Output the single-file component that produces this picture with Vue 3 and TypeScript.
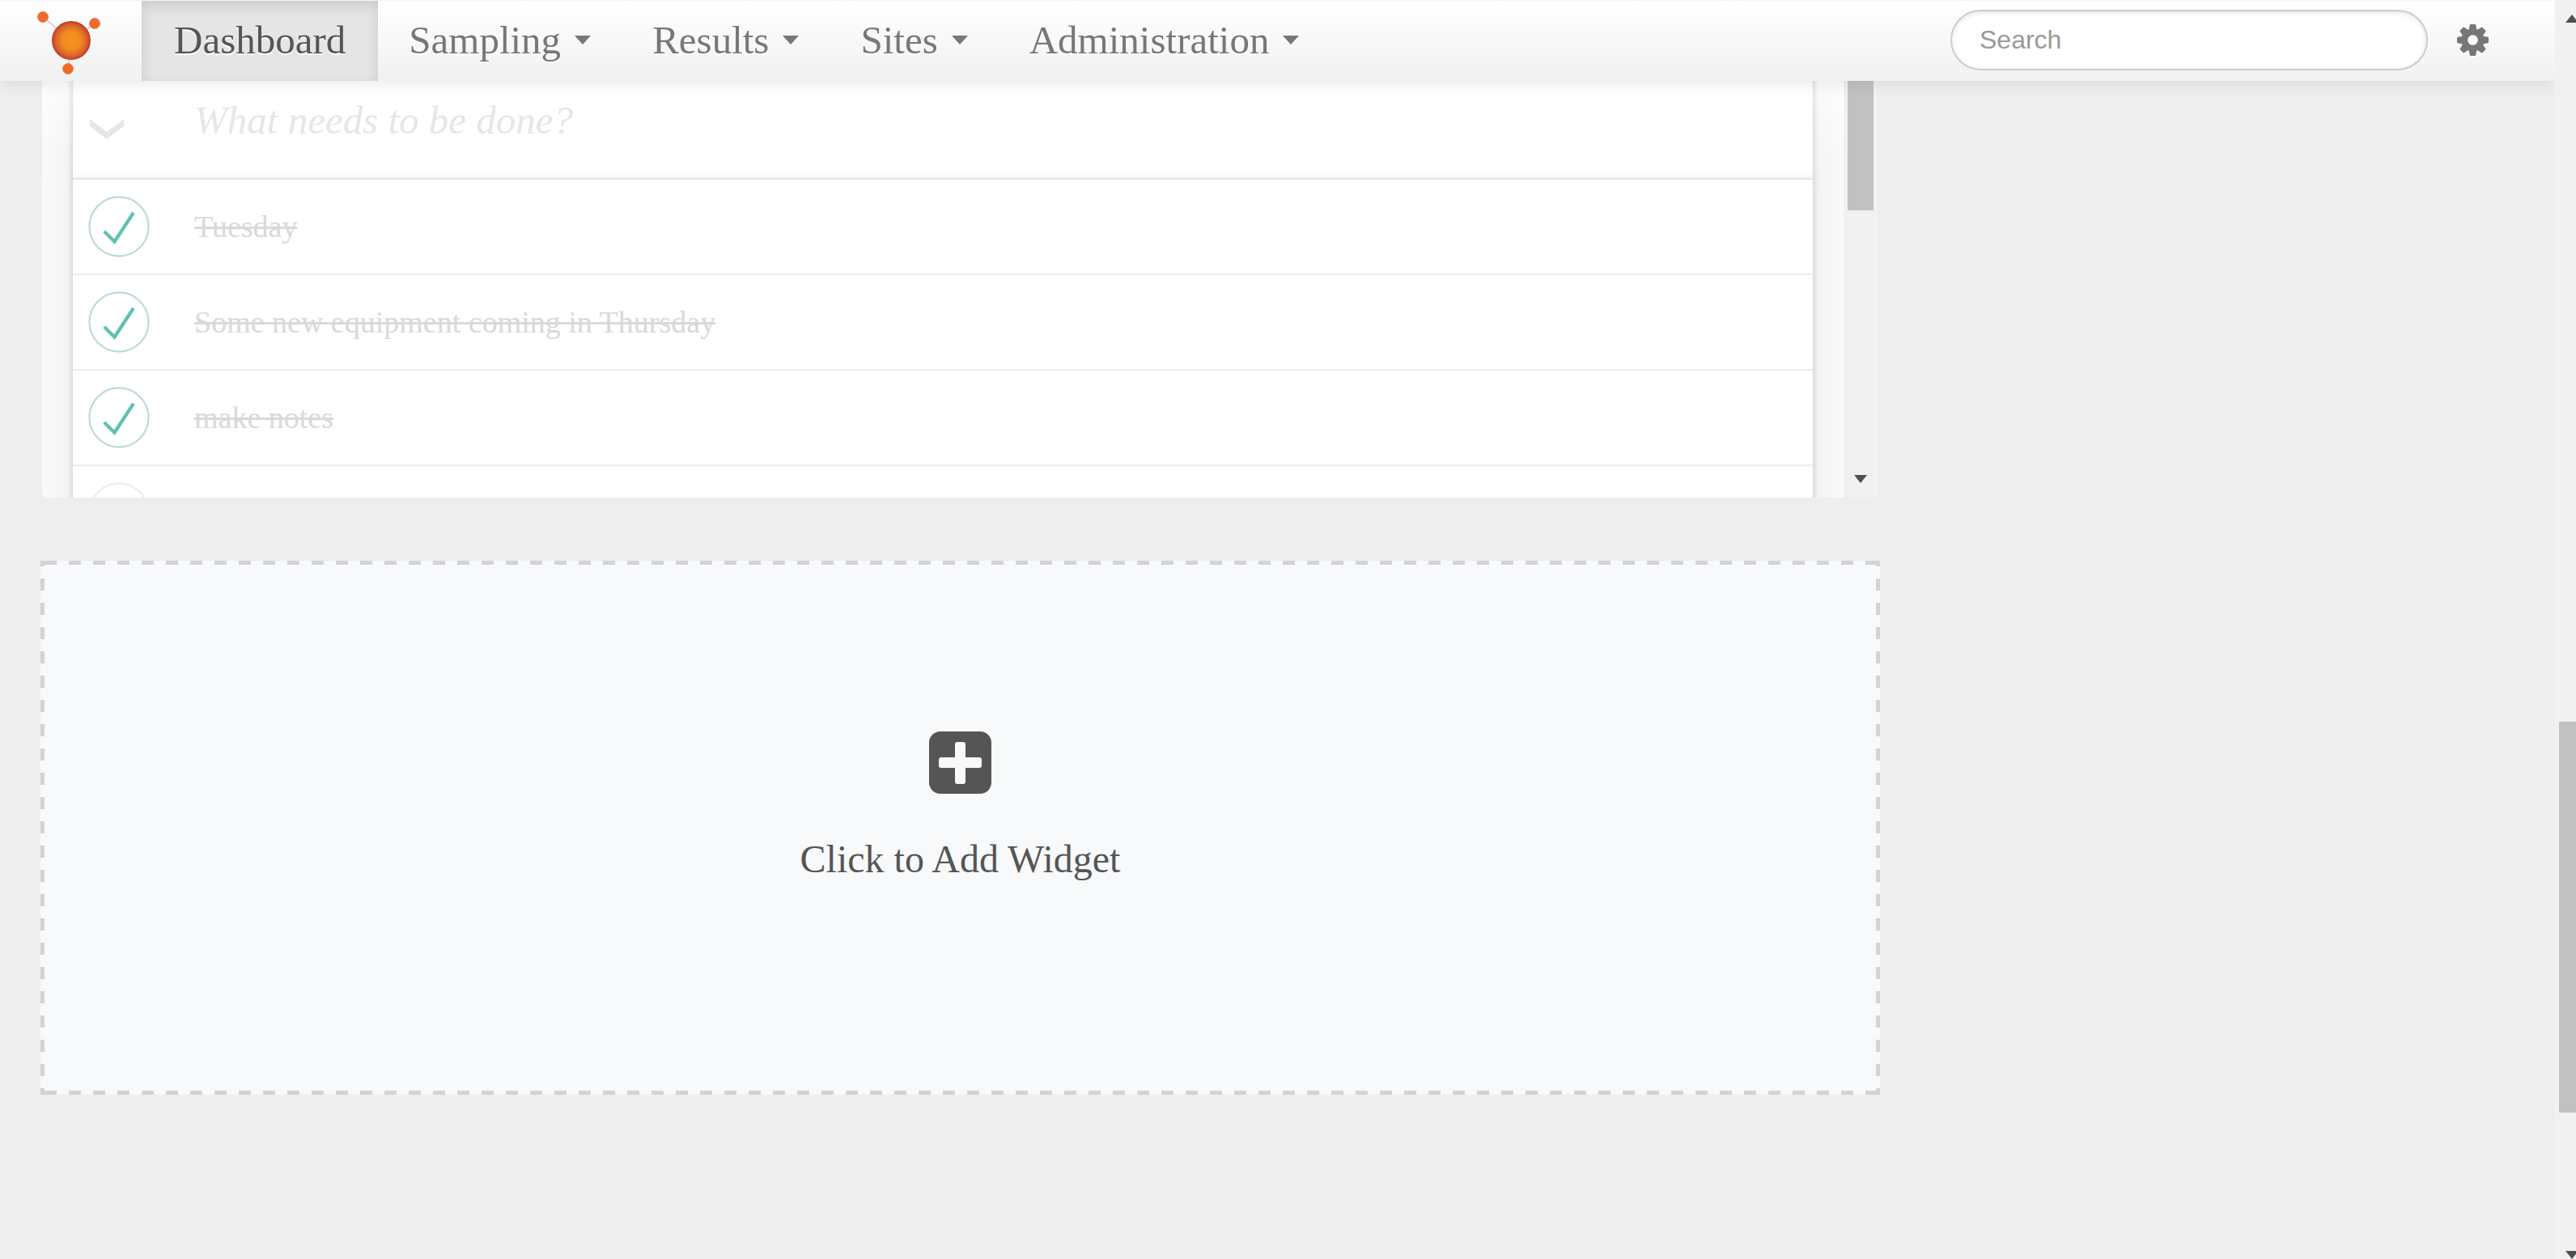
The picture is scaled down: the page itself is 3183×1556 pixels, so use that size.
<script setup lang="ts">
import { ref } from 'vue'

interface MenuItem {
  label: string
  active?: boolean
}

interface Todo {
  id: number
  title: string
  done: boolean
}

const menu: MenuItem[] = [
  { label: 'Dashboard', active: true },
  { label: 'Sampling' },
  { label: 'Results' },
  { label: 'Sites' },
  { label: 'Administration' },
]

const query = ref('')
const draft = ref('')
const todos = ref<Todo[]>([
  { id: 1, title: 'Tuesday', done: true },
  { id: 2, title: 'Some new equipment coming in Thursday', done: true },
  { id: 3, title: 'make notes', done: true },
  { id: 4, title: '', done: false },
])
</script>

<template>
  <div class="shell">
    <div class="page">
      <header class="navbar">
        <a class="brand" href="#" aria-label="Home">
          <svg width="80" height="80" viewBox="0 0 80 80" aria-hidden="true">
            <defs>
              <radialGradient id="core">
                <stop offset="0" stop-color="#f7941e" />
                <stop offset="0.45" stop-color="#f18c20" />
                <stop offset="0.8" stop-color="#d9642a" />
                <stop offset="1" stop-color="#bf3a27" />
              </radialGradient>
            </defs>
            <path d="M8 8 43 37M72 16 43 37M39 72 43 37" stroke="#d3d3d3" stroke-width="2" />
            <circle cx="43" cy="37" r="24" fill="url(#core)" />
            <g fill="#f26a25" stroke="#d98a60" stroke-width="1">
              <circle cx="8" cy="8" r="6.500" />
              <circle cx="72" cy="16" r="6.500" />
              <circle cx="39" cy="72" r="6.500" />
            </g>
          </svg>
        </a>
        <nav class="menu">
          <a v-for="item in menu" :key="item.label" href="#" :class="{ active: item.active }">
            {{ item.label }}<i v-if="!item.active" class="caret"></i>
          </a>
        </nav>
        <input v-model="query" class="search" type="search" placeholder="Search" aria-label="Search" />
        <button class="settings" type="button" aria-label="Settings">
          <svg width="39" height="39" viewBox="-20 -20 40 40" aria-hidden="true">
            <g fill="#777">
              <path
                fill-rule="evenodd"
                d="M0-14.500A14.500 14.500 0 1 1 0 14.500A14.500 14.500 0 1 1 0-14.500ZM0-6.500A6.500 6.500 0 1 0 0 6.500A6.500 6.500 0 1 0 0-6.500Z"
              />
              <path
                v-for="n in 8"
                :key="n"
                :transform="`rotate(${n * 45})`"
                d="M-5-13-3.800-19.200Q-3.500-20-2.800-20H2.800Q3.500-20 3.800-19.200L5-13Z"
              />
            </g>
          </svg>
        </button>
      </header>

      <main class="column">
        <section class="widget">
          <div class="viewport">
            <div class="todoapp">
              <div class="entry">
                <button class="toggle-all" type="button" aria-label="Mark all as complete">
                  <svg width="42" height="26" viewBox="0 0 42 26" aria-hidden="true">
                    <path d="M0 0 21 16 42 0V9L21 25 0 9Z" fill="#e6e6e6" />
                  </svg>
                </button>
                <input v-model="draft" placeholder="What needs to be done?" aria-label="New item" />
              </div>
              <ul>
                <li v-for="todo in todos" :key="todo.id">
                  <label :class="{ done: todo.done }">
                    <input v-model="todo.done" type="checkbox" :aria-label="todo.title || 'Item'" />
                    <svg width="76" height="76" viewBox="-2 -2 104 104" aria-hidden="true">
                      <circle cx="50" cy="50" r="50" />
                      <path v-if="todo.done" d="M72 25 42 71 27 56l-4 4 20 20 34-52z" />
                    </svg>
                    <span>{{ todo.title }}</span>
                  </label>
                </li>
              </ul>
            </div>
          </div>
          <div class="scrollbar inner" aria-hidden="true">
            <i class="thumb"></i>
            <i class="arrow down"></i>
          </div>
        </section>

        <button class="add" type="button">
          <svg width="77" height="77" viewBox="0 0 77 77" aria-hidden="true">
            <rect width="77" height="77" rx="14" fill="#555" />
            <rect x="32" y="13" width="13" height="52" rx="3" fill="#f7f9fb" />
            <rect x="12" y="32" width="53" height="13" rx="3" fill="#f7f9fb" />
          </svg>
          <span>Click to Add Widget</span>
        </button>
      </main>
    </div>

    <div class="gutter" aria-hidden="true">
      <div class="scrollbar outer">
        <i class="arrow up"></i>
        <i class="thumb"></i>
        <i class="arrow down"></i>
      </div>
    </div>
  </div>
</template>

<style>
body {
  margin: 0;
  background: #eee;
}
</style>

<style scoped>
* {
  box-sizing: border-box;
}

button,
input {
  font: inherit;
  border: 0;
  padding: 0;
  background: none;
}

svg {
  display: block;
}

.shell {
  display: flex;
  min-height: 100vh;
  font-family: 'Liberation Serif', serif;
}

.page {
  flex: 1;
  min-width: 0;
  overflow: hidden;
}

.navbar {
  position: relative;
  z-index: 2;
  display: flex;
  align-items: center;
  height: 100px;
  border-top: 1px solid #f5f5f5;
  background: linear-gradient(#fff, #f1f1f1);
  box-shadow: 0 2px 20px rgba(0, 0, 0, 0.1);
}

.brand {
  width: 175px;
  padding: 4px 0 0 45px;
}

.menu {
  display: flex;
  flex: 1;
  align-self: stretch;
}

.menu a {
  display: flex;
  align-items: center;
  padding: 0 38px 2px;
  color: #777;
  font-size: 49px;
  line-height: 56px;
  text-decoration: none;
  text-shadow: 0 2px 0 #fff;
}

.menu .active {
  padding: 0 40px 2px;
  color: #555;
  background: #e5e5e5;
  box-shadow: inset 0 6px 16px rgba(0, 0, 0, 0.125);
}

.caret {
  margin-left: 17px;
  border: 10px solid transparent;
  border-top: 11px solid #777;
  border-bottom: 0;
}

.search {
  width: 590px;
  height: 75px;
  margin-bottom: 2px;
  padding: 0 34px;
  border: 2px solid #ccc;
  border-radius: 38px;
  background: #fff;
  box-shadow: inset 0 2px 6px rgba(0, 0, 0, 0.1);
  color: #555;
  font-family: 'Liberation Sans', sans-serif;
  font-size: 32px;
  appearance: none;
}

.search::placeholder {
  color: #999;
  opacity: 1;
}

.settings {
  margin: 0 82px 2px 36px;
  filter: drop-shadow(0 2px 0 #fff);
}

.column {
  width: 72%;
  margin-left: 50px;
}

.widget {
  display: flex;
  height: 540px;
  margin: -25px 3px 0 2px;
  overflow: hidden;
  border-radius: 6px;
  background: #fff;
}

.viewport {
  flex: 1;
  min-width: 0;
  padding: 0 38px;
  overflow: hidden;
}

.todoapp {
  background: #fff;
  box-shadow: 0 4px 8px rgba(0, 0, 0, 0.2), 0 50px 100px rgba(0, 0, 0, 0.1);
}

.entry {
  display: flex;
  align-items: center;
  height: 147px;
  border-bottom: 2px solid #e6e6e6;
  box-shadow: inset 0 -4px 4px rgba(0, 0, 0, 0.03);
}

.toggle-all {
  width: 150px;
  padding: 24px 0 0 21px;
}

.entry input {
  flex: 1;
  height: 145px;
  padding-top: 2px;
  outline: 0;
  font-size: 49px;
}

.entry input::placeholder {
  color: #e6e6e6;
  opacity: 1;
  font-style: italic;
}

ul {
  margin: 0;
  padding: 0;
  list-style: none;
}

li {
  height: 118px;
  border-bottom: 2px solid #ededed;
}

li label {
  display: flex;
  align-items: center;
  gap: 55px;
  height: 100%;
  padding-left: 19px;
  font-size: 38px;
  line-height: 46px;
}

li input {
  position: absolute;
  opacity: 0;
}

li circle {
  fill: none;
  stroke: #ededed;
  stroke-width: 3;
}

li path {
  fill: #5dc2af;
}

.done circle {
  stroke: #bddad5;
}

.done span {
  color: #d9d9d9;
  text-decoration: line-through;
}

.add {
  display: flex;
  flex-direction: column;
  align-items: center;
  justify-content: center;
  gap: 57px;
  width: 100%;
  height: 660px;
  margin-top: 78px;
  padding-bottom: 56px;
  color: #555;
  font-size: 48px;
  line-height: 48px;
  --across: linear-gradient(90deg, #d2d3d7 15px, transparent 15px);
  --down: linear-gradient(#d2d3d7 15px, transparent 15px);
  background:
    var(--down) 0 -8px / 5px 30px repeat-y,
    var(--down) 100% -8px / 5px 30px repeat-y,
    var(--across) 5px 0 / 30px 5px repeat-x,
    var(--across) 5px 100% / 30px 5px repeat-x,
    #f7f9fb;
}

.scrollbar {
  position: relative;
  display: grid;
  width: 42px;
  background: #f1f1f1;
}

.inner {
  grid-template-rows: 185fr 355fr;
}

.outer {
  grid-template-rows: 892fr 483fr 181fr;
  height: 100%;
  min-height: 100vh;
}

.thumb {
  margin: 0 5px;
  background: #c1c1c1;
}

.outer .thumb {
  grid-row: 2;
}

.arrow {
  position: absolute;
  left: 13px;
  border: 8px solid transparent;
}

.up {
  top: 18px;
  border-top: 0;
  border-bottom: 10px solid #505050;
}

.down {
  bottom: 18px;
  border-top: 10px solid #505050;
  border-bottom: 0;
}

.outer .down {
  bottom: 0;
}

.gutter {
  width: 26px;
  overflow: hidden;
}
</style>
